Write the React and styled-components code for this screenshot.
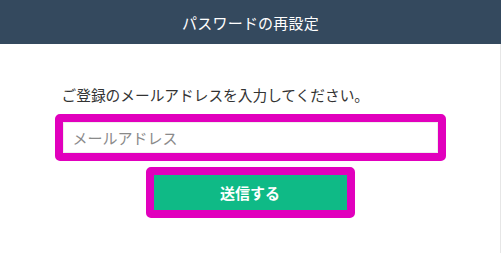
import styled, { createGlobalStyle } from "styled-components";

// Page-wide reset and font.
const GlobalStyle = createGlobalStyle`
  html, body {
    margin: 0;
    padding: 0;
    background: #fff;
    font-family: "Noto Sans CJK JP", "Noto Sans", sans-serif;
  }
`;

const Header = styled.header`
  height: 44px;
  background-color: #34495e;
  display: flex;
  align-items: center;
  justify-content: center;
`;

const Title = styled.h1`
  margin: 0;
  color: #fff;
  font-size: 15px;
  font-weight: 400;
  letter-spacing: 0.2px;
`;

const Main = styled.main`
  height: 209px;
  border-right: 1px solid #e6e6e6;
  box-sizing: border-box;
  padding-top: 41px;
`;

const Form = styled.form`
  width: 391px;
  margin: 0 auto;
  display: flex;
  flex-direction: column;
  align-items: center;
`;

const Lead = styled.p`
  align-self: stretch;
  margin: 0 0 9px;
  padding-left: 7px;
  font-size: 14.7px;
  line-height: 20px;
  color: #333;
`;

// Magenta highlight frame around each control.
const Frame = styled.div`
  box-sizing: border-box;
  width: ${(p) => p.$width}px;
  height: ${(p) => p.$height}px;
  border: 8px solid #e100bd;
  border-radius: 5px;
  margin-bottom: ${(p) => p.$gap || 0}px;
  display: flex;
`;

const Input = styled.input`
  flex: 1;
  min-width: 0;
  box-sizing: border-box;
  border: 1px solid #eee;
  outline: none;
  padding: 0 9px;
  font-family: inherit;
  font-size: 15px;
  color: #333;
  background: #fff;
  &::placeholder {
    color: #8a8a8a;
  }
`;

const SubmitBtn = styled.button`
  flex: 1;
  border: none;
  background-color: #0fba86;
  color: #fff;
  font-family: inherit;
  font-size: 15px;
  font-weight: 700;
  cursor: pointer;
`;

const App = () => {
  return (
    <>
      <GlobalStyle />
      <Header>
        <Title>パスワードの再設定</Title>
      </Header>
      <Main>
        <Form onSubmit={(e) => e.preventDefault()}>
          <Lead>ご登録のメールアドレスを入力してください。</Lead>
          <Frame $width={391} $height={47} $gap={6}>
            <Input type="email" placeholder="メールアドレス" />
          </Frame>
          <Frame $width={209} $height={51}>
            <SubmitBtn type="submit">送信する</SubmitBtn>
          </Frame>
        </Form>
      </Main>
    </>
  );
};

export default App;
